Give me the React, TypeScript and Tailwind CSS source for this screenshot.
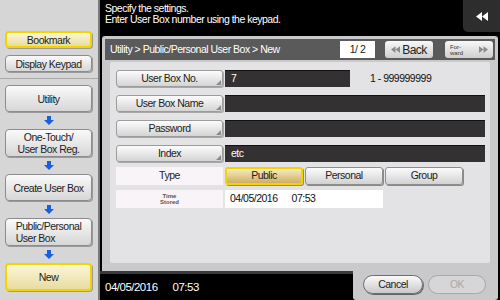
import React from "react";

const font = { fontFamily: '"Liberation Sans", Arial, sans-serif' };

function DownArrow() {
  return (
    <div className="h-[17px] flex items-center justify-center">
      <svg width="10" height="9" viewBox="0 0 10 9">
        <path d="M3 0h4v4h3L5 9 0 4h3z" fill="#1a5fe0" />
      </svg>
    </div>
  );
}

function SideButton({ label, active, h }: { label: React.ReactNode; active?: boolean; h: string }) {
  const base = active
    ? "bg-gradient-to-b from-[#fbf6d8] to-[#e9dca0] border-[#f3d400] border-2"
    : "bg-gradient-to-b from-[#fafafa] to-[#d6d6d6] border border-[#8c8c8c]";
  return (
    <div
      className={`${h} ${base} rounded-[4px] shadow-[1px_1px_0_#9a9a9a] flex items-center justify-center text-center text-[10.5px] leading-[12px] text-[#222]`}
    >
      {label}
    </div>
  );
}

function FieldLabel({ label }: { label: string }) {
  return (
    <div className="relative w-[107px] h-[17px] rounded-[3px] border border-[#9c9c9c] bg-gradient-to-b from-[#fcfcfc] to-[#d4d4d4] flex items-center justify-center text-[10.5px] text-[#222] shadow-[1px_1px_0_#a8a8a8]">
      {label}
      <svg className="absolute right-[1px] bottom-[1px]" width="5" height="5" viewBox="0 0 5 5">
        <path d="M5 0v5H0z" fill="#8a8a8a" />
      </svg>
    </div>
  );
}

function Row({ label, value, narrow, after }: { label: string; value?: string; narrow?: boolean; after?: string }) {
  return (
    <div className="flex items-center gap-[2px] h-[17px]">
      <FieldLabel label={label} />
      <div
        className={`${narrow ? "w-[125px]" : "w-[260px]"} h-[17px] bg-[#333131] border-t border-[#111] text-white text-[10.5px] px-[6px] flex items-center`}
      >
        {value}
      </div>
      {after && <div className="ml-[18px] text-[10.5px] text-[#111]">{after}</div>}
    </div>
  );
}

function TypeButton({ label, active }: { label: string; active?: boolean }) {
  const cls = active
    ? "bg-gradient-to-b from-[#f6ecbf] to-[#cfae62] border-2 border-[#f3d400]"
    : "bg-gradient-to-b from-[#fbfbfb] to-[#d2d2d2] border border-[#8e8e8e]";
  return (
    <div className={`w-[78px] h-[18px] rounded-[3px] ${cls} shadow-[1px_1px_0_#8a8a8a] flex items-center justify-center text-[10.5px] text-[#222]`}>
      {label}
    </div>
  );
}

export default function App() {
  return (
    <div className="w-[500px] h-[300px] flex bg-black overflow-hidden tracking-[-0.5px]" style={font}>
      {/* sidebar */}
      <div className="w-[100px] h-full bg-[#d6d6d6] border-r-2 border-[#7a7a7a] flex flex-col pl-[5px] pr-[6px] pt-[31px]">
        <SideButton label="Bookmark" active h="h-[17px]" />
        <div className="mt-[7px]">
          <SideButton label="Display Keypad" h="h-[17px]" />
        </div>
        <div className="mt-[6px] -ml-[5px] -mr-[6px] border-t border-[#a9a9a9]" />
        <div className="mt-[6px]">
          <SideButton label="Utility" h="h-[27px]" />
        </div>
        <DownArrow />
        <SideButton label={<>One-Touch/<br />User Box Reg.</>} h="h-[28px]" />
        <DownArrow />
        <SideButton label="Create User Box" h="h-[27px]" />
        <DownArrow />
        <SideButton label={<div className="text-left">Public/Personal<br />User Box</div>} h="h-[28px]" />
        <DownArrow />
        <SideButton label="New" active h="h-[28px]" />
      </div>

      {/* main */}
      <div className="flex-1 flex flex-col">
        <div className="h-[36px] flex">
          <div className="flex-1 pl-[5px] pt-[3px] text-white text-[10.5px] leading-[11px]">
            <div>Specify the settings.</div>
            <div>Enter User Box number using the keypad.</div>
          </div>
          <div className="w-[37px] h-[32px] bg-[#2e2d2e] rounded-bl-[5px] flex items-center justify-center">
            <svg width="12" height="9" viewBox="0 0 12 9">
              <path d="M0 4.5L6 0v9zM6 4.5L12 0v9z" fill="#fff" />
            </svg>
          </div>
        </div>

        <div className="ml-[2px] mr-[2px] h-[235px] bg-[#c9c8ca] rounded-t-[3px] px-[3px] pt-[3px] flex flex-col">
          {/* header */}
          <div className="h-[21px] bg-[#5b5a5b] flex items-center pl-[5px] pr-[2px]">
            <div className="flex-1 text-white text-[10.5px]">Utility &gt; Public/Personal User Box &gt; New</div>
            <div className="w-[35px] h-[17px] bg-white flex items-center justify-center text-[10.5px] text-[#222]">1/ 2</div>
            <div className="ml-[10px] w-[48px] h-[17px] rounded-[3px] bg-gradient-to-b from-[#f8f8f8] to-[#cfcfcf] flex items-center justify-center gap-[2px] text-[12px] text-[#222]">
              <svg width="9" height="7" viewBox="0 0 12 9">
                <path d="M0 4.5L6 0v9zM6 4.5L12 0v9z" fill="#8c8c8c" />
              </svg>
              Back
            </div>
            <div className="ml-[12px] w-[48px] h-[17px] rounded-[3px] bg-gradient-to-b from-[#f8f8f8] to-[#cfcfcf] flex items-center justify-between px-[5px]">
              <div className="text-[6px] leading-[6px] tracking-normal text-[#333]">For-<br />ward</div>
              <svg width="9" height="7" viewBox="0 0 12 9">
                <path d="M12 4.5L6 0v9zM6 4.5L0 0v9z" fill="#8c8c8c" />
              </svg>
            </div>
          </div>
          {/* body */}
          <div className="mt-[2px] ml-[5px] mr-[5px] h-[201px] bg-[#e3e2e5] rounded-[2px] pl-[6px] pt-[8px] flex flex-col">
            <Row label="User Box No." value="7" narrow after="1 - 999999999" />
            <div className="mt-[8px]"><Row label="User Box Name" /></div>
            <div className="mt-[8px]"><Row label="Password" /></div>
            <div className="mt-[8px]"><Row label="Index" value="etc" /></div>
            <div className="mt-[5px] flex items-center gap-[2px] h-[18px]">
              <div className="w-[107px] h-[18px] bg-[#f8f4f8] flex items-center justify-center text-[10.5px] text-[#222]">Type</div>
              <TypeButton label="Public" active />
              <TypeButton label="Personal" />
              <TypeButton label="Group" />
            </div>
            <div className="mt-[5px] flex items-center gap-[2px] h-[18px]">
              <div className="w-[107px] h-[18px] bg-[#f8f4f8] flex flex-col items-center justify-center text-[6px] leading-[6px] tracking-normal font-bold text-[#555]">
                <div>Time</div>
                <div>Stored</div>
              </div>
              <div className="w-[158px] h-[18px] bg-white flex items-center pl-[5px] text-[10.5px] text-[#111]">
                04/05/2016<span className="ml-[14px]">07:53</span>
              </div>
            </div>
          </div>
        </div>

        {/* bottom */}
        <div className="flex-1 flex">
          <div className="flex-1 flex items-center pl-[5px] pt-[2px] text-white text-[11.5px] border-t-[3px] border-[#3a3a3a]">
            04/05/2016<span className="ml-[15px]">07:53</span>
          </div>
          <div className="w-[145px] mr-[2px] bg-[#c9c8ca] rounded-b-[3px] flex items-center gap-[5px] pl-[10px] pb-[2px]">
            <div className="w-[60px] h-[19px] rounded-full border border-[#6e6e6e] bg-gradient-to-b from-[#fafafa] to-[#c9c9c9] shadow-[1px_1px_0_#666] flex items-center justify-center text-[10.5px] text-[#222]">
              Cancel
            </div>
            <div className="w-[58px] h-[19px] rounded-full border border-[#a8a8a8] bg-[#d6d5d7] flex items-center justify-center text-[10.5px] text-[#a9a9a9]">
              OK
            </div>
          </div>
        </div>
      </div>
    </div>
  );
}
